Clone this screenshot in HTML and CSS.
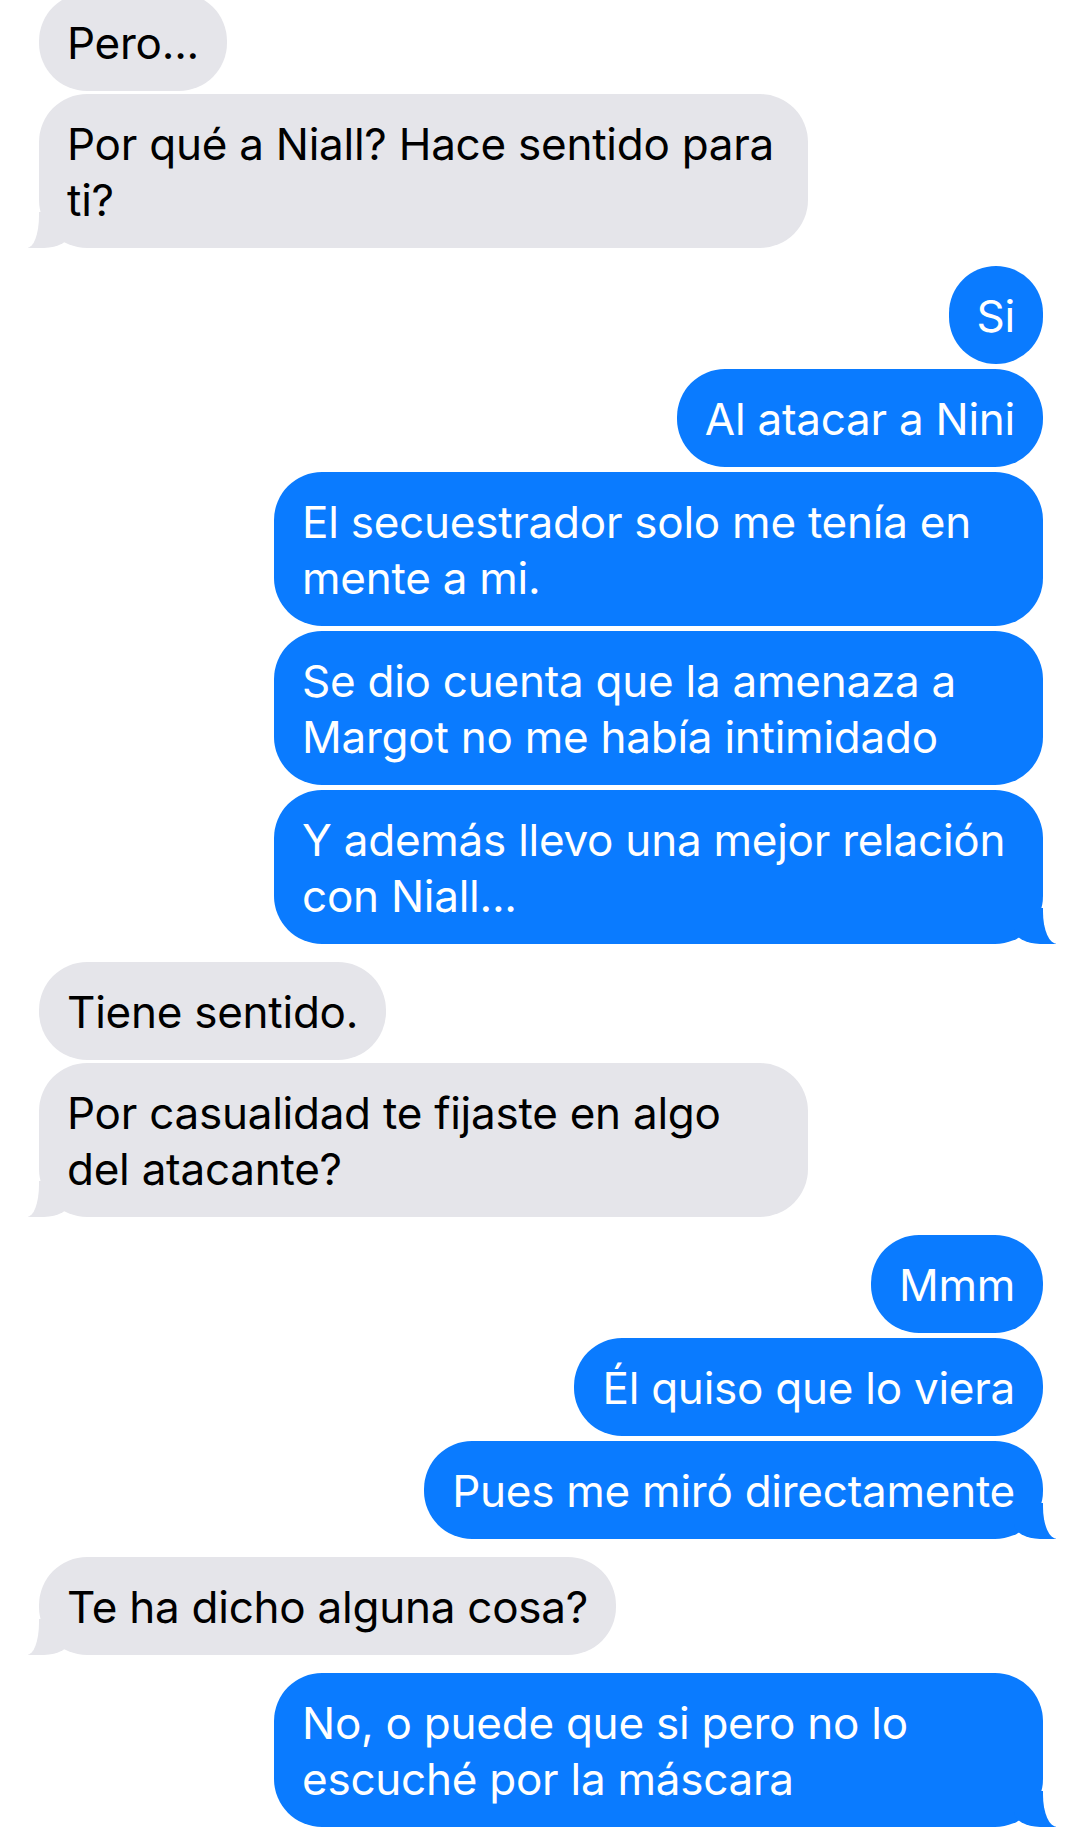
FILE: index.html
```html
<!DOCTYPE html>
<html lang="es">
<head>
    <meta charset="UTF-8">
    <meta name="viewport" content="width=device-width, initial-scale=1.0">
    <title>Mensajes</title>
    <link rel="stylesheet" href="styles.css">
</head>
<body>
    <div class="chat">
        <div class="group them">
            <div class="bubble">Pero...</div>
            <div class="bubble tail">Por qué a Niall? Hace sentido para ti?</div>
        </div>
        <div class="group me">
            <div class="bubble">Si</div>
            <div class="bubble">Al atacar a Nini</div>
            <div class="bubble">El secuestrador solo me tenía en mente a mi.</div>
            <div class="bubble">Se dio cuenta que la amenaza a Margot no me había intimidado</div>
            <div class="bubble tail">Y además llevo una mejor relación con Niall...</div>
        </div>
        <div class="group them">
            <div class="bubble">Tiene sentido.</div>
            <div class="bubble tail">Por casualidad te fijaste en algo del atacante?</div>
        </div>
        <div class="group me">
            <div class="bubble">Mmm</div>
            <div class="bubble">Él quiso que lo viera</div>
            <div class="bubble tail">Pues me miró directamente</div>
        </div>
        <div class="group them">
            <div class="bubble tail">Te ha dicho alguna cosa?</div>
        </div>
        <div class="group me">
            <div class="bubble tail">No, o puede que si pero no lo escuché por la máscara</div>
        </div>
    </div>
</body>
</html>
```

FILE: styles.css
```css
body {
    margin: 0;
    background: #fff;
    font-family: Inter, "Liberation Sans", Arial, sans-serif;
    overflow: hidden;
}
.chat {
    display: flex;
    flex-direction: column;
    gap: 18px;
    margin-top: -7px;
    padding: 0 37px 0 39px;
}
.group {
    display: flex;
    flex-direction: column;
}
.group.them {
    align-items: flex-start;
    gap: 3px;
}
.group.me {
    align-items: flex-end;
    gap: 5px;
}
.bubble {
    position: relative;
    max-width: 769px;
    box-sizing: border-box;
    padding: 22px 28px 20px;
    border-radius: 48px;
    font-size: 44px;
    line-height: 56px;
    letter-spacing: -0.25px;
}
.them .bubble {
    background: #e5e5ea;
    color: #000;
}
.me .bubble {
    background: #0a7bff;
    color: #fff;
}
/* colita de la burbuja */
.bubble.tail::before,
.bubble.tail::after {
    content: "";
    position: absolute;
    bottom: 0;
    height: 36px;
}
.me .bubble.tail::before {
    right: -13px;
    width: 42px;
    background: #0a7bff;
    border-bottom-left-radius: 26px 15px;
}
.me .bubble.tail::after {
    right: -30px;
    width: 30px;
    background: #fff;
    border-bottom-left-radius: 14px 32px;
}
.them .bubble.tail::before {
    left: -11px;
    width: 42px;
    background: #e5e5ea;
    border-bottom-right-radius: 26px 15px;
}
.them .bubble.tail::after {
    left: -30px;
    width: 30px;
    background: #fff;
    border-bottom-right-radius: 12px 32px;
}
```
